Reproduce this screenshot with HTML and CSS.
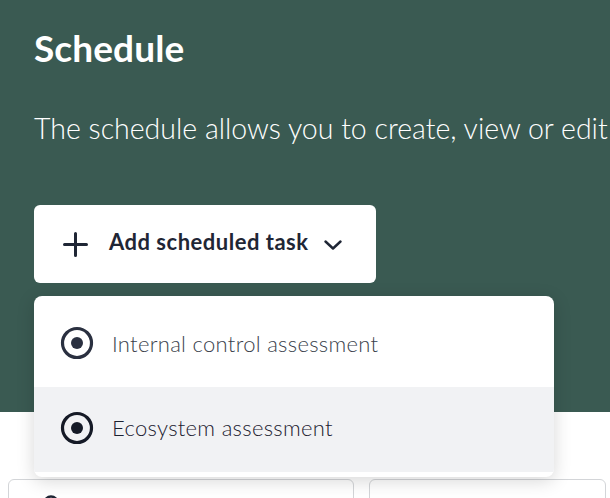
FILE: index.html
```html
<!DOCTYPE html>
<html lang="en">
<head>
<meta charset="utf-8">
<title>Schedule</title>
<link rel="stylesheet" href="styles.css">
</head>
<body>
<div class="page">
  <header class="hero">
    <h1 class="hero-title">Schedule</h1>
    <p class="hero-text">The schedule allows you to create, view or edit</p>
    <button class="add-btn" type="button">
      <svg class="add-icon" width="25" height="25" viewBox="0 0 25 25" aria-hidden="true">
        <path d="M12.5 1.5v22M1.5 12.5h22" stroke="#1f2635" stroke-width="3" stroke-linecap="round" fill="none"/>
      </svg>
      <span class="add-label">Add scheduled task</span>
      <svg class="chev" width="18" height="10" viewBox="0 0 18 10" aria-hidden="true">
        <path d="M1.5 1.5l7.5 7 7.5-7" stroke="#1f2635" stroke-width="2.4" stroke-linecap="round" stroke-linejoin="round" fill="none"/>
      </svg>
    </button>
  </header>

  <main class="content">
    <div class="cards">
      <div class="card card-wide">
        <svg class="card-icon" width="16" height="16" viewBox="0 0 16 16" aria-hidden="true">
          <circle cx="8" cy="8" r="6.5" stroke="#1f2635" stroke-width="2.5" fill="none"/>
        </svg>
      </div>
      <div class="card card-narrow"></div>
    </div>
  </main>

  <ul class="menu">
    <li class="menu-item">
      <svg class="radio" width="34" height="34" viewBox="0 0 34 34" aria-hidden="true">
        <circle cx="17" cy="17" r="14.5" stroke="#2a3040" stroke-width="3.2" fill="none"/>
        <circle cx="17" cy="17" r="6" fill="#2a3040"/>
      </svg>
      <span class="menu-label">Internal control assessment</span>
    </li>
    <li class="menu-item menu-item-active">
      <svg class="radio" width="34" height="34" viewBox="0 0 34 34" aria-hidden="true">
        <circle cx="17" cy="17" r="14.5" stroke="#151a26" stroke-width="3.2" fill="none"/>
        <circle cx="17" cy="17" r="6" fill="#151a26"/>
      </svg>
      <span class="menu-label">Ecosystem assessment</span>
    </li>
  </ul>
</div>
</body>
</html>
```

FILE: styles.css
```css
html, body {
  margin: 0;
  padding: 0;
}

body {
  font-family: Lato, "Noto Sans", "Liberation Sans", sans-serif;
  background: #ffffff;
  overflow: hidden;
}

.page {
  position: relative;
  width: 610px;
  height: 498px;
  overflow: hidden;
}

.hero {
  background: #3a5a52;
  height: 412px;
  box-sizing: border-box;
  padding: 26px 0 0 34px;
  display: flex;
  flex-direction: column;
  align-items: flex-start;
}

.hero-title {
  margin: 0;
  font-size: 37px;
  line-height: 44px;
  font-weight: 700;
  color: #ffffff;
  letter-spacing: 0.1px;
}

.hero-text {
  margin: 40px 0 0 0;
  font-size: 28.5px;
  line-height: 36px;
  font-weight: 300;
  color: #ffffff;
  letter-spacing: 0;
  white-space: nowrap;
}

.add-btn {
  margin-top: 59px;
  width: 342px;
  height: 78px;
  box-sizing: border-box;
  border: none;
  border-radius: 6px;
  background: #ffffff;
  padding: 0 0 0 29px;
  display: flex;
  align-items: center;
  font-family: inherit;
  cursor: pointer;
}

.add-icon {
  flex: none;
  margin-top: 1px;
}

.add-label {
  margin-left: 21px;
  margin-bottom: 6px;
  font-size: 22px;
  font-weight: 700;
  letter-spacing: 0.5px;
  color: #1f2635;
  white-space: nowrap;
}

.chev {
  flex: none;
  margin-left: 15px;
  margin-top: 2px;
}

.content {
  padding: 67px 0 0 8px;
}

.cards {
  display: flex;
  gap: 15px;
}

.card {
  height: 100px;
  box-sizing: border-box;
  border: 1px solid #d3d5d8;
  border-radius: 6px;
  background: #ffffff;
}

.card-wide {
  width: 346px;
  padding: 15px 0 0 34px;
}

.card-narrow {
  width: 237px;
}

.card-icon {
  display: block;
}

.menu {
  position: absolute;
  top: 296px;
  left: 34px;
  width: 520px;
  margin: 0;
  padding: 0 0 5px 0;
  list-style: none;
  background: #ffffff;
  border-radius: 8px;
  box-shadow: 0 4px 18px rgba(0, 0, 0, 0.16);
  overflow: hidden;
}

.menu-item {
  height: 91px;
  box-sizing: border-box;
  padding: 3px 0 0 26px;
  display: flex;
  align-items: center;
}

.menu-item-active {
  height: 85px;
  padding-top: 0;
  padding-bottom: 4px;
  background: #f1f2f4;
}

.radio {
  flex: none;
}

.menu-label {
  margin-left: 18px;
  font-size: 22px;
  font-weight: 300;
  letter-spacing: 0.3px;
  color: #3a3f4b;
  white-space: nowrap;
}

.menu-item-active .menu-label {
  color: #1c2130;
}
```
